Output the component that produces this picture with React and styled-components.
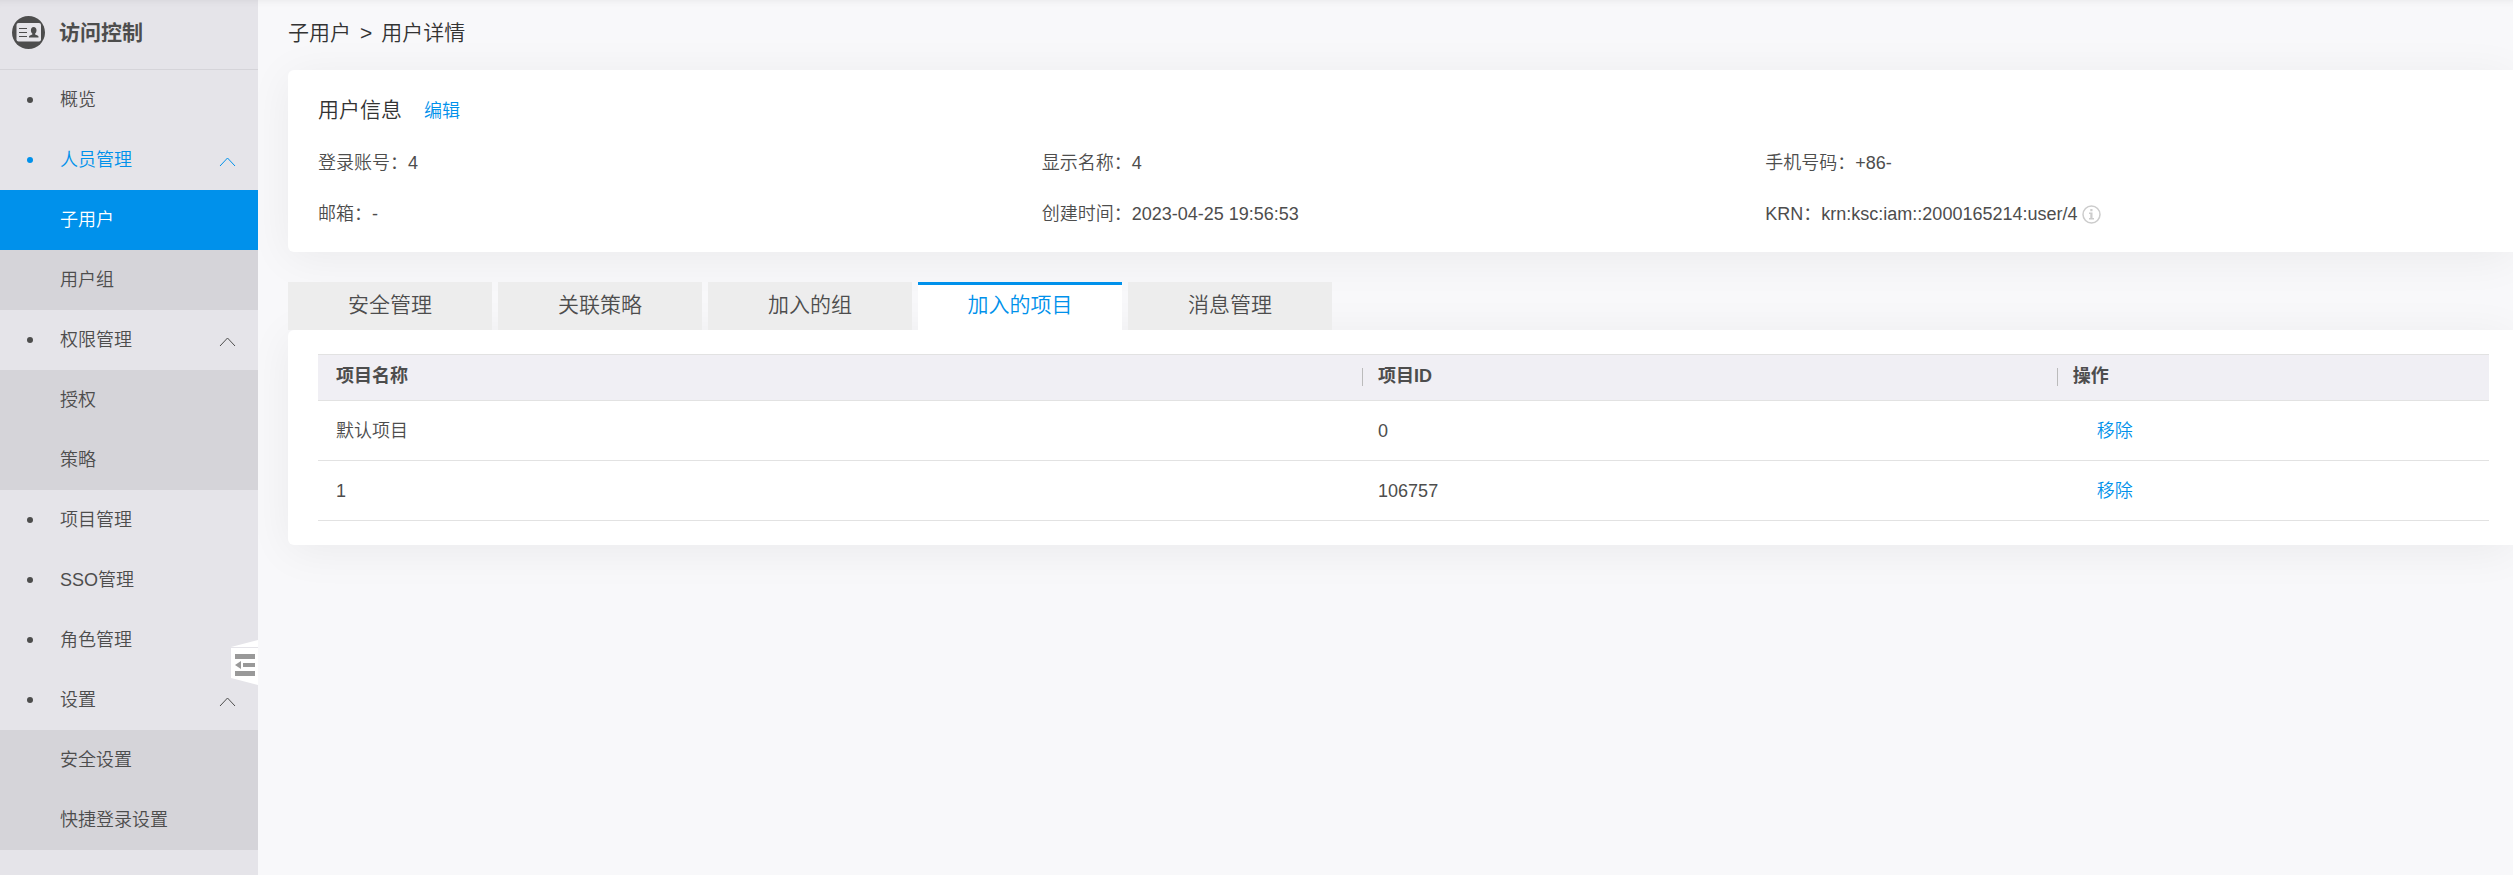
import styled, { createGlobalStyle } from "styled-components"
import { useState } from "react"

const menu = [
    { name: "概览" },
    { name: "人员管理", children: ["子用户", "用户组"] },
    { name: "权限管理", children: ["授权", "策略"] },
    { name: "项目管理" },
    { name: "SSO管理" },
    { name: "角色管理" },
    { name: "设置", children: ["安全设置", "快捷登录设置"] },
]

const userInfo = [
    { label: "登录账号", value: "4" },
    { label: "显示名称", value: "4" },
    { label: "手机号码", value: "+86-" },
    { label: "邮箱", value: "-" },
    { label: "创建时间", value: "2023-04-25 19:56:53" },
    { label: "KRN", value: "krn:ksc:iam::2000165214:user/4", tip: true },
]

const tabs = ["安全管理", "关联策略", "加入的组", "加入的项目", "消息管理"]

const projects = [
    { name: "默认项目", id: "0" },
    { name: "1", id: "106757" },
]

const LogoIcon = () => (
    <svg width="33" height="33" viewBox="0 0 33 33" aria-hidden="true">
        <circle cx="16.5" cy="16.5" r="16.5" fill="#4d4d4d" />
        <rect x="4.5" y="7" width="24.5" height="18.5" rx="2" fill="#e5e4e9" />
        <path d="M7 12.5h8M7 16.5h8M7 20.5h8" stroke="#4d4d4d" strokeWidth="1.200" />
        <path d="M21.500 11c2 0 3 1.400 3 3.200 0 1.500-.6 2.600-1.400 3.300v1l2.400.9c.6.2 1 .7 1 1.300v.8h-9.500v-.8c0-.6.3-1.100.9-1.300l2.400-.9v-1c-.8-.7-1.400-1.800-1.400-3.300 0-1.800 1-3.200 2.600-3.200z" fill="#4d4d4d" />
    </svg>
)

const Arrow = () => (
    <svg width="17" height="13" viewBox="0 0 17 13" fill="none" stroke="currentColor" aria-hidden="true">
        <path d="M1 12L8.500 4L16 12" />
    </svg>
)

const TipIcon = () => (
    <svg width="19" height="19" viewBox="0 0 19 19" aria-hidden="true">
        <circle cx="9.500" cy="9.500" r="8.500" fill="none" stroke="#ccc" strokeWidth="1.500" />
        <path d="M8.300 4h2.200v2.200H8.300zM7 7.500h3.500v5.500H12v1.500H7V13h1.300V9H7z" fill="#ccc" />
    </svg>
)

const CollapseIcon = () => (
    <svg width="27" height="45" viewBox="0 0 27 45" aria-hidden="true">
        <path d="M0 7L27 0V45L0 38z" fill="#fff" />
        <path d="M0 7.500H27" stroke="#e5e4e9" />
        <path d="M4 14h20v5H4zM12 23h12v4H12zM4 31h20v5H4zM4 25l6-4v8z" fill="#999" />
    </svg>
)

const App = () => {
    const [activeTab, setActiveTab] = useState("加入的项目")
    const [activeMenu, setActiveMenu] = useState("子用户")

    return (
        <Container>
            <GlobalStyle />
            <Sidebar>
                <Brand>
                    <LogoIcon />
                    访问控制
                </Brand>
                {menu.map(item => {
                    const open = item.children && item.children.includes(activeMenu)
                    return (
                        <div key={item.name}>
                            <MenuItem $open={open}>
                                <Dot />
                                <MenuText>{item.name}</MenuText>
                                {item.children && <Arrow />}
                            </MenuItem>
                            {item.children && item.children.map(sub => (
                                <SubItem key={sub} $active={sub === activeMenu} onClick={() => setActiveMenu(sub)}>{sub}</SubItem>
                            ))}
                        </div>
                    )
                })}
                <Collapse aria-label="收起菜单"><CollapseIcon /></Collapse>
            </Sidebar>
            <Main>
                <Breadcrumb>
                    <Crumb href="#">子用户</Crumb>
                    <span>&gt;</span>
                    <span>用户详情</span>
                </Breadcrumb>
                <InfoCard>
                    <InfoHeader>
                        <InfoTitle>用户信息</InfoTitle>
                        <Link href="#">编辑</Link>
                    </InfoHeader>
                    <InfoGrid>
                        {userInfo.map(info => (
                            <InfoItem key={info.label}>
                                <span>{info.label}：</span>
                                <span>{info.value}</span>
                                {info.tip && <TipIcon />}
                            </InfoItem>
                        ))}
                    </InfoGrid>
                </InfoCard>
                <Tabs>
                    {tabs.map(tab => (
                        <Tab key={tab} $active={tab === activeTab} onClick={() => setActiveTab(tab)}>{tab}</Tab>
                    ))}
                </Tabs>
                <TableCard>
                    <Table>
                        <thead>
                            <tr>
                                <Th $width="48%">项目名称</Th>
                                <Th $width="32%">项目ID</Th>
                                <Th $width="20%">操作</Th>
                            </tr>
                        </thead>
                        <tbody>
                            {projects.map(project => (
                                <tr key={project.id}>
                                    <Td>{project.name}</Td>
                                    <Td>{project.id}</Td>
                                    <Td><RemoveLink href="#">移除</RemoveLink></Td>
                                </tr>
                            ))}
                        </tbody>
                    </Table>
                </TableCard>
            </Main>
        </Container>
    )
}

const GlobalStyle = createGlobalStyle`
    * {
        box-sizing: border-box;
    }
    body {
        margin: 0;
        background-color: #f8f8fa;
        color: #4d4d4d;
        font-family: "Liberation Sans", "Noto Sans CJK SC", sans-serif;
        font-size: 18px;
        font-weight: 350;
        line-height: 24px;
    }
    button {
        border: none;
        padding: 0;
        font: inherit;
        color: inherit;
        background: none;
        cursor: pointer;
    }
    a {
        text-decoration: none;
    }
`

const Container = styled.div`
    display: flex;
    min-height: 100vh;
    overflow: hidden;
    box-shadow: inset 0 8px 8px -8px rgba(0, 0, 0, 0.08);
`
const Sidebar = styled.nav`
    position: relative;
    z-index: 1;
    width: 258px;
    flex-shrink: 0;
    background-color: #e5e4e9;
    box-shadow: inset 0 8px 8px -8px rgba(0, 0, 0, 0.08);
`
const Brand = styled.div`
    display: flex;
    align-items: center;
    gap: 14px;
    height: 70px;
    padding: 0 12px 4px;
    border-bottom: 1px solid #d5d4d9;
    font-size: 21px;
    font-weight: 700;
`
const MenuItem = styled.button`
    display: flex;
    align-items: center;
    width: 100%;
    height: 60px;
    padding: 0 22px 0 27px;
    text-align: left;
    color: ${props => props.$open ? "#0091eb" : "#4d4d4d"};
`
const Dot = styled.span`
    width: 6px;
    height: 6px;
    margin-right: 27px;
    border-radius: 50%;
    background-color: currentColor;
`
const MenuText = styled.span`
    flex: 1;
`
const SubItem = styled.button`
    display: block;
    width: 100%;
    height: 60px;
    padding-left: 60px;
    text-align: left;
    color: ${props => props.$active ? "#fff" : "#4d4d4d"};
    background-color: ${props => props.$active ? "#0091eb" : "#d5d4d9"};
`
const Collapse = styled.button`
    position: absolute;
    right: 0;
    top: 640px;
    display: flex;
`
const Main = styled.main`
    flex: 1;
    min-width: 0;
    padding-left: 30px;
`
const Breadcrumb = styled.div`
    display: flex;
    align-items: center;
    gap: 9px;
    height: 70px;
    padding-bottom: 4px;
    font-size: 21px;
    color: #333;
`
const Crumb = styled.a`
    color: inherit;
`
const Card = styled.section`
    border-radius: 6px 0 0 6px;
    background-color: #fff;
    box-shadow: 0 6px 45px rgba(0, 0, 0, 0.06);
`
const InfoCard = styled(Card)`
    padding: 27px 24px 24px 30px;
`
const InfoHeader = styled.div`
    display: flex;
    align-items: center;
    gap: 22px;
    height: 27px;
`
const InfoTitle = styled.h2`
    margin: 0;
    padding-bottom: 2px;
    font-size: 21px;
    font-weight: 350;
    color: #333;
`
const Link = styled.a`
    color: #0091eb;
`
const InfoGrid = styled.div`
    display: grid;
    grid-template-columns: repeat(3, 1fr);
    row-gap: 27px;
    padding-top: 27px;
    padding-bottom: 2px;
`
const InfoItem = styled.div`
    display: flex;
    align-items: center;
    height: 24px;
    >svg{
        margin-left: 4px;
    }
`
const Tabs = styled.div`
    display: flex;
    gap: 6px;
    margin-top: 30px;
`
const Tab = styled.button`
    width: 204px;
    height: 48px;
    padding-bottom: 5px;
    border-top: 3px solid ${props => props.$active ? "#0091eb" : "#ededed"};
    font-size: 21px;
    color: ${props => props.$active ? "#0091eb" : "#4d4d4d"};
    background-color: ${props => props.$active ? "#fff" : "#ededed"};
`
const TableCard = styled(Card)`
    padding: 24px 24px 24px 30px;
`
const Table = styled.table`
    width: 100%;
    table-layout: fixed;
    border-spacing: 0;
    text-align: left;
`
const Th = styled.th`
    position: relative;
    width: ${props => props.$width};
    height: 47px;
    padding: 0 18px 3px;
    border-top: 1px solid #e2e2e2;
    border-bottom: 1px solid #e2e2e2;
    background-color: #f0eff4;
    font-weight: 700;

    &:not(:first-child)::before {
        content: "";
        position: absolute;
        left: 2px;
        top: 13px;
        width: 1px;
        height: 18px;
        background-color: #bbb;
    }
`
const Td = styled.td`
    height: 60px;
    padding: 0 18px;
    border-bottom: 1px solid #e2e2e2;
`
const RemoveLink = styled(Link)`
    margin-left: 24px;
`

export default App
